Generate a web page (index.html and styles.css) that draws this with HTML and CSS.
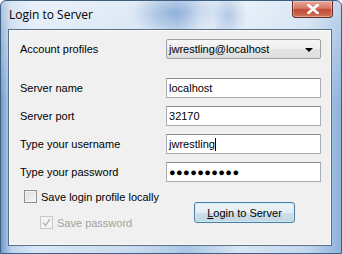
FILE: index.html
```html
<!DOCTYPE html>
<html lang="en">
<head>
    <meta charset="UTF-8">
    <title>Login to Server</title>
    <link rel="stylesheet" href="styles.css">
</head>
<body>
    <div class="window">
        <div class="title-bar">
            <span class="title">Login to Server</span>
            <button class="close-btn" aria-label="Close">
                <svg width="12" height="10" viewBox="0 0 12 10">
                    <path d="M1.5 1 L10.5 9 M10.5 1 L1.5 9" stroke="#fff" stroke-width="2.6" stroke-linecap="square"/>
                </svg>
            </button>
        </div>

        <div class="client">
            <div class="form-row profile-row">
                <label>Account profiles</label>
                <div class="combo">
                    <span>jwrestling@localhost</span>
                    <span class="combo-arrow"></span>
                </div>
            </div>

            <div class="form-row">
                <label>Server name</label>
                <div class="field">localhost</div>
            </div>
            <div class="form-row">
                <label>Server port</label>
                <div class="field">32170</div>
            </div>
            <div class="form-row">
                <label>Type your username</label>
                <div class="field">jwrestling<span class="caret"></span></div>
            </div>
            <div class="form-row">
                <label>Type your password</label>
                <div class="field password">&#9679;&#9679;&#9679;&#9679;&#9679;&#9679;&#9679;&#9679;&#9679;&#9679;</div>
            </div>

            <div class="bottom">
                <div class="options">
                    <div class="check-row">
                        <span class="checkbox"></span>
                        <span>Save login profile locally</span>
                    </div>
                    <div class="check-row sub disabled">
                        <span class="checkbox checked">
                            <svg width="9" height="9" viewBox="0 0 9 9">
                                <path d="M1 4.5 L3.5 7.5 L8 1" fill="none" stroke="#b9b9b9" stroke-width="1.4"/>
                            </svg>
                        </span>
                        <span>Save password</span>
                    </div>
                </div>
                <button class="login-btn"><u>L</u>ogin to Server</button>
            </div>
        </div>
    </div>
</body>
</html>
```

FILE: styles.css
```css
* {
    margin: 0;
    padding: 0;
    box-sizing: border-box;
}
body {
    font-family: 'Liberation Sans', Arial, sans-serif;
    font-size: 11px;
    color: #000;
    background: #fff;
}
.window {
    width: 342px;
    height: 254px;
    display: flex;
    flex-direction: column;
    background:
        radial-gradient(ellipse 45px 22px at 175px 12px, rgba(80,130,195,0.5), transparent),
        radial-gradient(ellipse 22px 26px at 198px 16px, rgba(255,255,255,0.75), transparent),
        radial-gradient(ellipse 18px 24px at 228px 14px, rgba(95,140,200,0.35), transparent),
        linear-gradient(180deg, rgba(255,255,255,0.45) 0%, rgba(255,255,255,0) 40%),
        linear-gradient(90deg, #6f9bcc 0%, #bcd3ec 3%, #d9e7f5 10%, #c9dbee 40%, #aac6e5 55%, #d8e6f4 70%, #c2d7ee 90%, #8fb3dc 100%);
    border: 1px solid #3f5f82;
    border-radius: 6px 6px 0 0;
}
.title-bar {
    height: 28px;
    display: flex;
    justify-content: space-between;
    align-items: flex-start;
    padding-left: 8px;
}
.title {
    font-family: 'Open Sans', sans-serif;
    font-size: 12px;
    line-height: 12px;
    margin-top: 8px;
    color: #000;
}
.close-btn {
    width: 41px;
    height: 17px;
    margin-right: 8px;
    border: 1px solid #6a2a22;
    border-top: none;
    border-radius: 0 0 4px 4px;
    background: linear-gradient(180deg, #e8a89a 0%, #d6796a 45%, #c24a36 55%, #d0735c 100%);
    display: flex;
    align-items: center;
    justify-content: center;
    box-shadow: inset 0 0 0 1px rgba(255,255,255,0.35);
}
.client {
    flex: 1;
    margin: 0 9px 7px 7px;
    background: #f0f0f0;
    border: 1px solid #5a6f86;
    box-shadow: inset 0 0 0 1px #fafafa;
    padding: 9px 10px 0 11px;
}
.form-row {
    display: flex;
    align-items: center;
    margin-bottom: 8px;
    height: 20px;
}
.profile-row {
    margin-bottom: 19px;
}
.form-row label {
    width: 147px;
}
.combo {
    width: 156px;
    height: 20px;
    border: 1px solid #a0a0a0;
    border-radius: 2px;
    background: linear-gradient(180deg, #f6f6f6 0%, #eeeeee 50%, #e4e4e4 51%, #dedede 100%);
    display: flex;
    align-items: center;
    justify-content: space-between;
    padding: 0 7px 0 2px;
}
.combo-arrow {
    width: 0;
    height: 0;
    border-left: 4px solid transparent;
    border-right: 4px solid transparent;
    border-top: 4px solid #000;
    margin-top: 2px;
}
.field {
    width: 156px;
    height: 20px;
    border: 1px solid #abadb3;
    border-top-color: #8a8c92;
    background: #fff;
    display: flex;
    align-items: center;
    padding-left: 2px;
}
.password {
    font-size: 11px;
    letter-spacing: 0.4px;
}
.caret {
    display: inline-block;
    width: 1px;
    height: 13px;
    background: #000;
}
.bottom {
    display: flex;
    margin-top: 6px;
}
.options {
    width: 174px;
    padding-left: 4px;
}
.check-row {
    display: flex;
    align-items: center;
    gap: 4px;
    height: 13px;
}
.check-row.sub {
    margin-top: 13px;
    padding-left: 16px;
}
.disabled {
    color: #a0a0a0;
}
.checkbox {
    width: 13px;
    height: 13px;
    border: 1px solid #8f8f8f;
    background: linear-gradient(135deg, #dcdcdc 0%, #f6f6f6 100%);
    box-shadow: inset 0 0 0 1px #f4f4f4;
    display: flex;
    align-items: center;
    justify-content: center;
}
.checkbox.checked {
    border-color: #c8c8c8;
    background: #f4f4f4;
}
.login-btn {
    margin-top: 12px;
    width: 101px;
    height: 21px;
    font-family: 'Liberation Sans', Arial, sans-serif;
    font-size: 11px;
    color: #000;
    border: 1px solid #4a7ea6;
    border-radius: 3px;
    background: linear-gradient(180deg, #eef5f9 0%, #e3edf3 50%, #cfdfe9 51%, #c2d6e3 100%);
    box-shadow: inset 0 0 0 1px rgba(200,240,255,0.8);
}
.login-btn u {
    text-decoration: underline;
}
```
